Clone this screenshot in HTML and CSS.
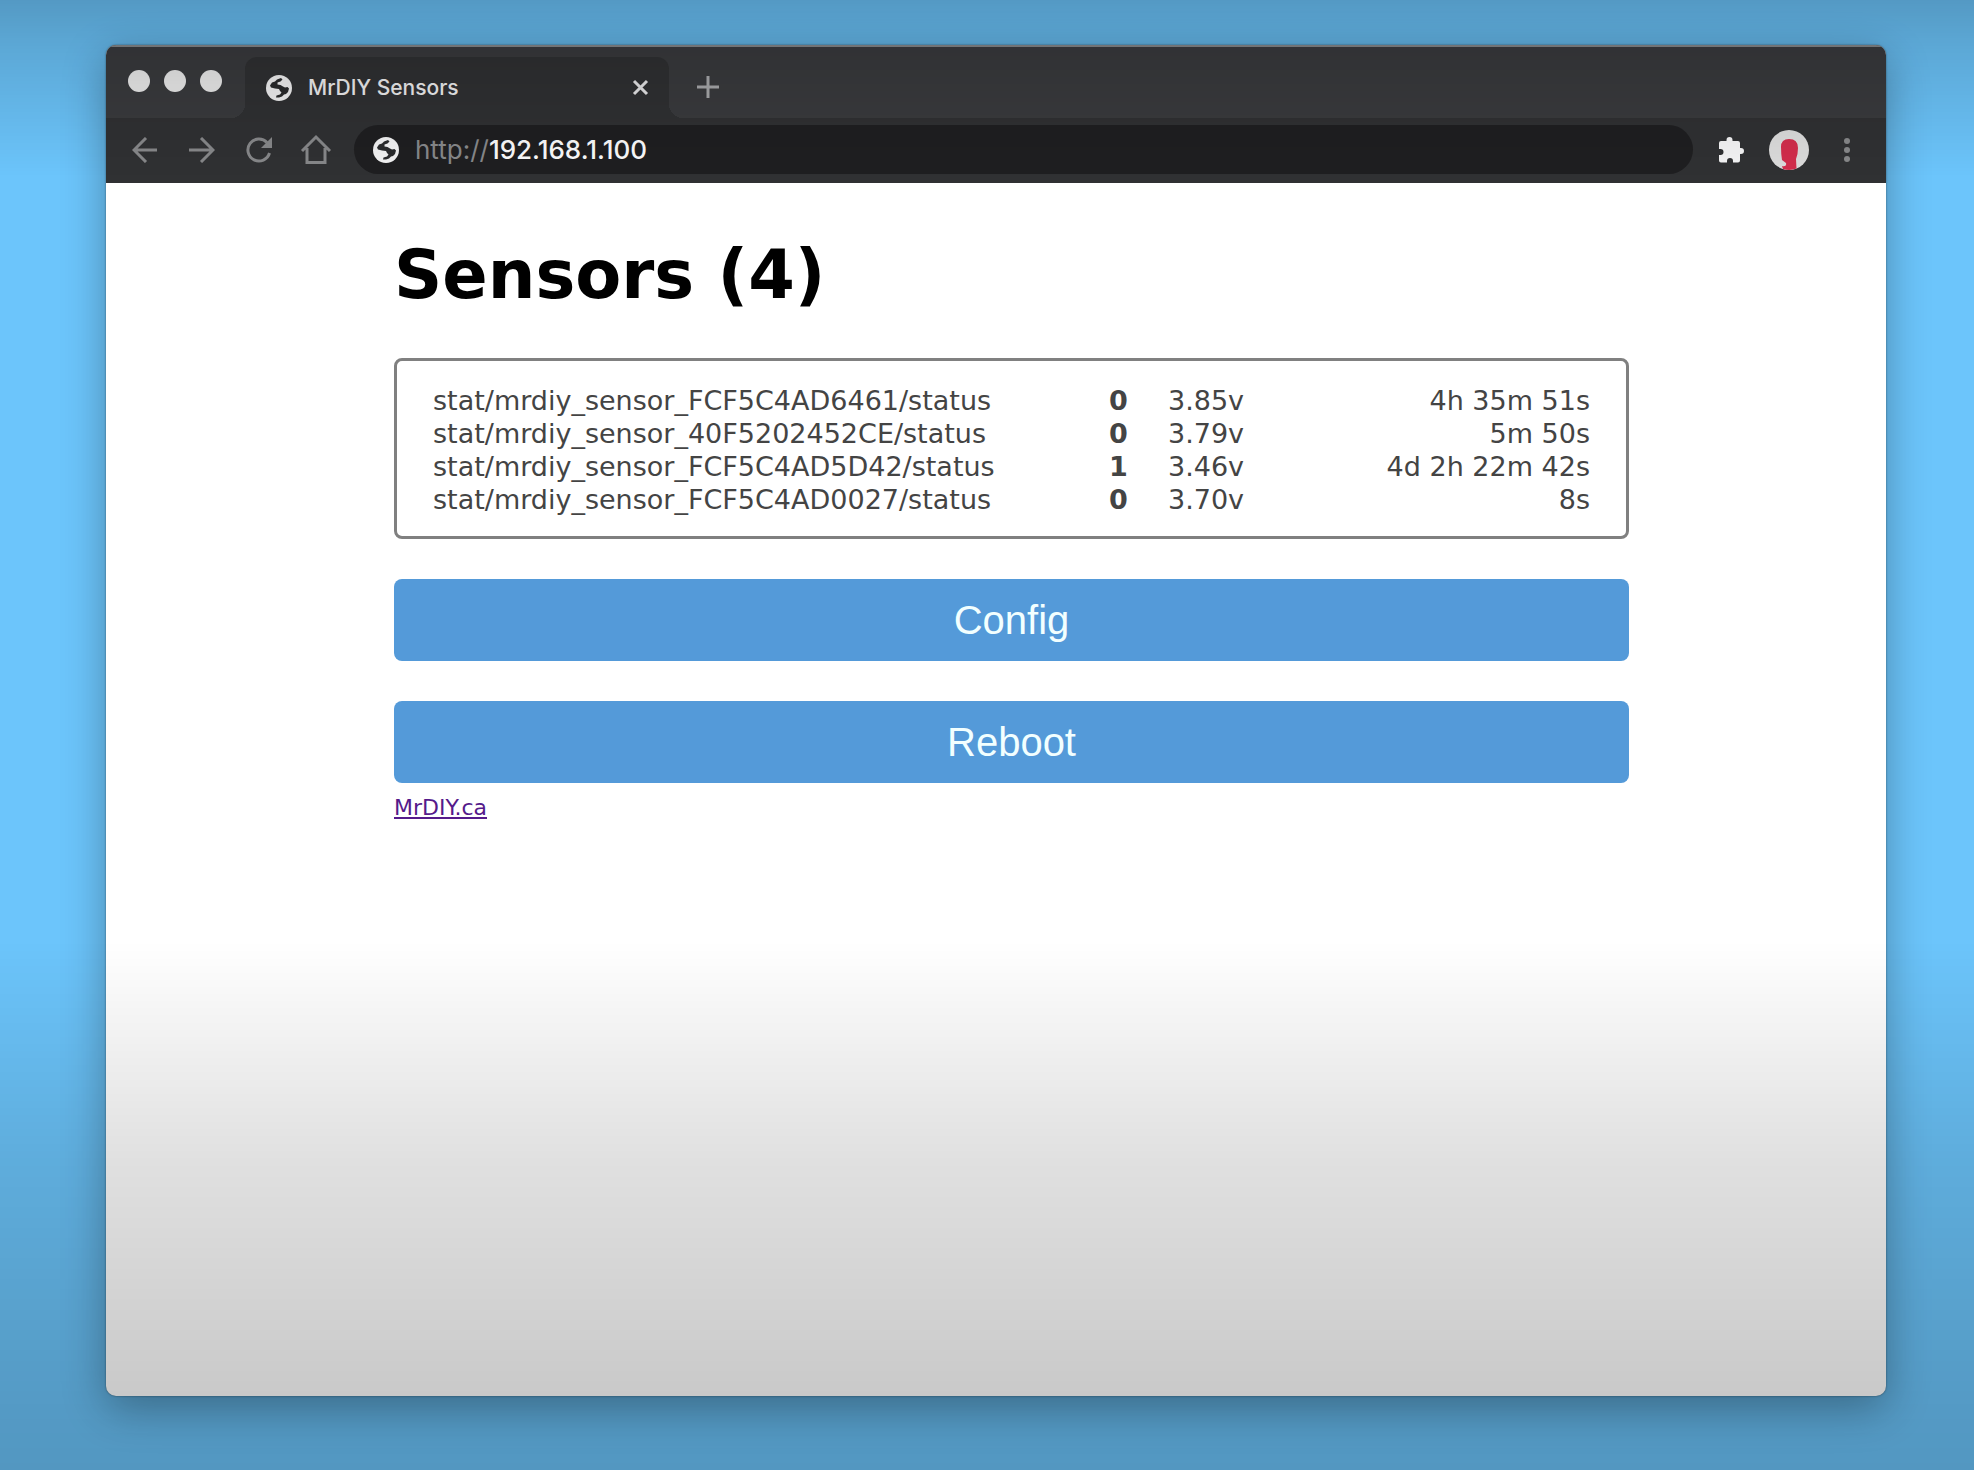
FILE: index.html
```html
<!DOCTYPE html>
<html lang="en">
<head>
<meta charset="utf-8">
<title>MrDIY Sensors</title>
<link rel="stylesheet" href="styles.css">
</head>
<body>
<svg class="defs" aria-hidden="true">
  <symbol id="globe" viewBox="0 0 26 26">
    <circle cx="13" cy="13" r="13" fill="#f2f2f3"/>
    <path fill="#2a2b2d" d="M15 3 16.500 4.500 14.500 6.500 11.500 7.500 11.500 9.500 14.500 10 17 11.500 19 12.500 21.500 12 23 13.500 22 17 20 19 18 19.500 16 21.500 13 22.500 10 22.500 10.500 20.500 14 19.500 15.500 17.500 14 16 13 14 9 13.500 5 12.500 4 10.500 6 7.500 9 6.500 11 4.500Z"/>
  </symbol>
</svg>
<div class="window">
  <header class="tabs">
    <div class="lights"><span class="light"></span><span class="light"></span><span class="light"></span></div>
    <div class="tab">
      <svg class="icon" aria-hidden="true"><use href="#globe"/></svg>
      <span class="tab-title">MrDIY Sensors</span>
      <button class="tool close" aria-label="Close tab"><svg class="icon" viewBox="0 0 26 26"><path d="M7 6 20 19M20 6 7 19" stroke="#e6e6e7" stroke-width="3"/></svg></button>
    </div>
    <button class="tool" aria-label="New tab"><svg class="icon" viewBox="0 0 26 26"><path d="M13 2V24M2 13H24" stroke="#a9aaac" stroke-width="3"/></svg></button>
  </header>
  <nav class="toolbar">
    <div class="nav-buttons">
      <button class="tool" aria-label="Back"><svg class="icon line" viewBox="0 0 26 26"><path d="M25 13H3M14 1 2 13 14 25"/></svg></button>
      <button class="tool" aria-label="Forward"><svg class="icon line" viewBox="0 0 26 26"><path d="M0 13H23M12 1 24 13 12 25"/></svg></button>
      <button class="tool" aria-label="Reload"><svg class="icon line" viewBox="0 0 26 26"><path d="M23.500 16A11 11 0 1 1 21 5.500"/><path d="M26 0V11H15Z" fill="#87888a" stroke="none"/></svg></button>
      <button class="tool" aria-label="Home"><svg class="icon line home" viewBox="0 0 26 26"><path d="M-1 14 13 0 27 14M4 11V25.500H22V11"/></svg></button>
    </div>
    <div class="address">
      <svg class="icon" aria-hidden="true"><use href="#globe"/></svg>
      <span class="url"><span class="scheme">http://</span>192.168.1.100</span>
    </div>
    <button class="tool" aria-label="Extensions"><svg class="icon" viewBox="0 0 26 26"><path fill="#f4f4f5" d="M3 4H8.500V3A3 3 0 0 1 14.500 3V4H20Q22 4 22 6V11H23A3 3 0 0 1 23 17H22V23.500Q22 25.500 20 25.500H15V24A3 3 0 0 0 9 24V25.500H3Q1 25.500 1 23.500V18H2.500A3 3 0 0 0 2.500 12H1V6Q1 4 3 4Z"/></svg></button>
    <button class="tool" aria-label="Profile"><svg class="avatar" viewBox="0 0 40 40"><circle cx="20" cy="20" r="20" fill="#dcdcdc"/><path fill="#d22d4c" d="M12 17Q12 9 20 9Q29 9 29 18Q29 24 27 29L27.500 38.500Q21 41 14 39L13 36Q18 37 17 33L13 30Q12 24 12 17Z"/></svg></button>
    <button class="tool" aria-label="Menu"><svg class="icon" viewBox="0 0 26 26" fill="#87888a"><circle cx="13" cy="4" r="3"/><circle cx="13" cy="13" r="3"/><circle cx="13" cy="22" r="3"/></svg></button>
  </nav>
  <main class="content">
    <h1>Sensors (4)</h1>
    <div class="panel">
      <table>
        <colgroup><col class="topic"><col class="state"><col class="volts"><col></colgroup>
        <tbody>
          <tr><td>stat/mrdiy_sensor_FCF5C4AD6461/status</td><th>0</th><td>3.85v</td><td class="age">4h 35m 51s</td></tr>
          <tr><td>stat/mrdiy_sensor_40F5202452CE/status</td><th>0</th><td>3.79v</td><td class="age">5m 50s</td></tr>
          <tr><td>stat/mrdiy_sensor_FCF5C4AD5D42/status</td><th>1</th><td>3.46v</td><td class="age">4d 2h 22m 42s</td></tr>
          <tr><td>stat/mrdiy_sensor_FCF5C4AD0027/status</td><th>0</th><td>3.70v</td><td class="age">8s</td></tr>
        </tbody>
      </table>
    </div>
    <button class="action">Config</button>
    <button class="action">Reboot</button>
    <a class="credit" href="#">MrDIY.ca</a>
  </main>
</div>
</body>
</html>
```

FILE: styles.css
```css
* { box-sizing: border-box; }

body {
  display: flex;
  min-height: 100vh;
  margin: 0;
  padding: 45px 88px 74px 106px;
  background: #6cc5fb;
  font-family: Verdana, "DejaVu Sans", sans-serif;
}

/* Shade over the whole desktop, darker at the top and bottom edges */
body::after {
  content: "";
  position: fixed;
  inset: 0;
  pointer-events: none;
  background:
    linear-gradient(rgba(0, 0, 0, 0.22), rgba(0, 0, 0, 0.15) 3%, transparent 12%),
    linear-gradient(transparent 64%, rgba(0, 0, 0, 0.12) 79%, rgba(0, 0, 0, 0.21) 95%, rgba(0, 0, 0, 0.23));
}

button {
  padding: 0;
  border: 0;
  background: none;
  cursor: pointer;
}

.defs { position: absolute; width: 0; height: 0; }

.window {
  display: flex;
  flex: 1;
  flex-direction: column;
  min-width: 0;
  border-radius: 10px;
  background: #fff;
  overflow: hidden;
  box-shadow: 0 0 2px rgba(0, 0, 0, 0.5), 0 12px 44px rgba(0, 0, 0, 0.32);
}

.tabs {
  display: flex;
  align-items: flex-end;
  height: 73px;
  padding-left: 22px;
  border-top: 2px solid #85888a;
  background: #3a3b3e;
  font-family: Inter, "Liberation Sans", sans-serif;
}

.lights { display: flex; gap: 14px; width: 117px; padding-bottom: 26px; }
.light { width: 22px; height: 22px; border-radius: 50%; background: #ececec; }

.tab {
  position: relative;
  display: flex;
  align-items: center;
  gap: 16px;
  width: 424px;
  height: 61px;
  padding: 0 16px 0 21px;
  border-radius: 12px 12px 0 0;
  background: #303133;
}
.tab::before, .tab::after {
  content: "";
  position: absolute;
  bottom: 0;
  width: 14px;
  height: 14px;
}
.tab::before { right: 100%; background: radial-gradient(circle at 0 0, transparent 14px, #303133 14px); }
.tab::after { left: 100%; background: radial-gradient(circle at 100% 0, transparent 14px, #303133 14px); }
.tab-title { color: #f0f0f1; font-size: 21px; font-weight: 500; }
.close { margin-left: auto; }
.tabs > .tool { margin: 0 0 18px 26px; }

.tool { display: flex; flex: none; }
.icon { flex: none; width: 26px; height: 26px; }
.line { fill: none; stroke: #87888a; stroke-width: 3; }
.home { overflow: visible; }
.avatar { width: 40px; height: 40px; }

.toolbar {
  display: flex;
  align-items: center;
  gap: 25px;
  height: 65px;
  padding: 0 26px 2px;
  background: #303133;
  font-family: Inter, "Liberation Sans", sans-serif;
}
.nav-buttons { display: flex; gap: 31px; }
.address {
  display: flex;
  flex: 1;
  align-items: center;
  gap: 16px;
  height: 49px;
  padding: 0 19px;
  border-radius: 25px;
  background: #1f1f21;
}
.url { color: #fafafb; font-size: 26px; font-weight: 500; }
.scheme { color: #87888a; font-weight: 400; }

.content { padding: 52px 257px 48px 288px; }
h1 { margin: 0 0 43px; font-size: 67px; line-height: 80px; }

.panel {
  margin-bottom: 40px;
  padding: 23px 36px 20px;
  border: 3px solid #808080;
  border-radius: 8px;
}
table { width: 100%; border-collapse: collapse; table-layout: fixed; color: #444; font-size: 27px; line-height: 33px; }
td, th { padding: 0; text-align: left; white-space: nowrap; }
.topic { width: 676px; }
.state { width: 59px; }
.volts { width: 160px; }
.age { text-align: right; }

.action {
  display: block;
  width: 100%;
  height: 82px;
  border-radius: 8px;
  background: #549ad9;
  color: #f2ffff;
  font: 40px "Liberation Sans", sans-serif;
}
.action + .action { margin-top: 40px; }
.credit { display: block; width: fit-content; margin-top: 10px; color: #551a8b; font-size: 22px; line-height: 30px; }
```
